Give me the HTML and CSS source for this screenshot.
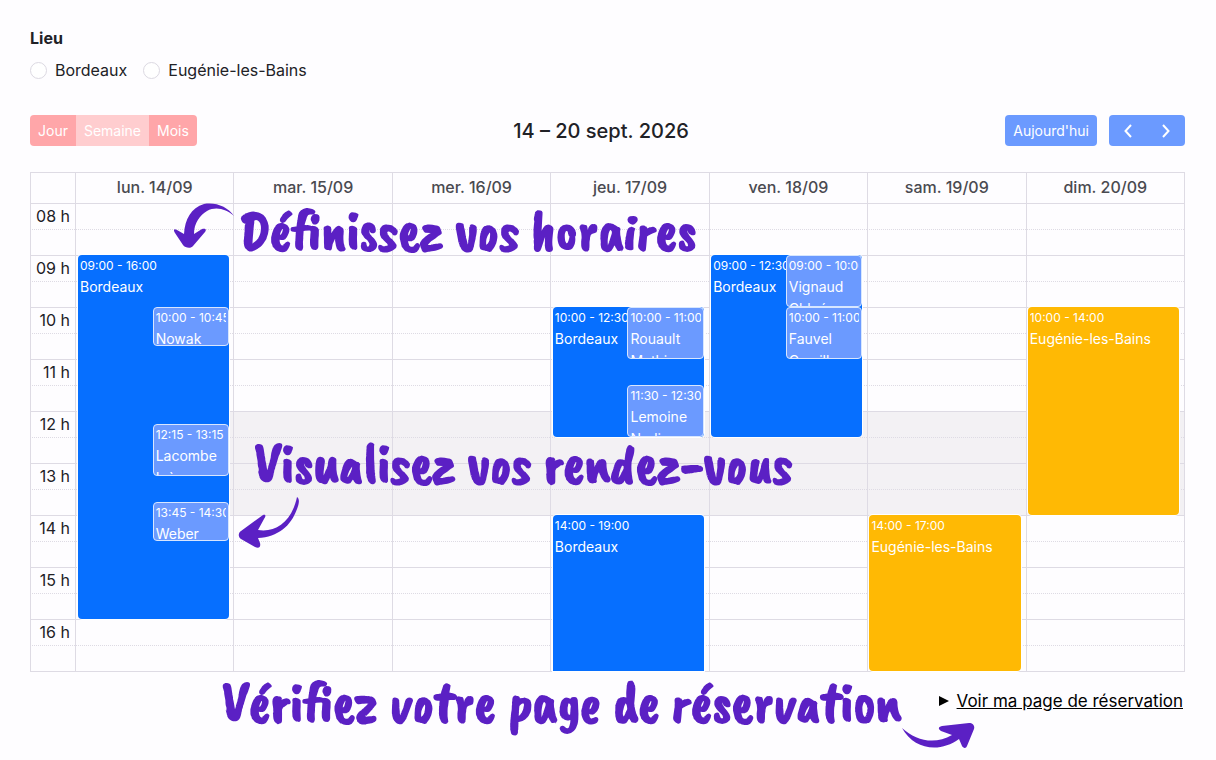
FILE: index.html
```
<!DOCTYPE html>
<html lang="fr">
<head>
    <meta charset="UTF-8">
    <meta name="viewport" content="width=device-width, initial-scale=1.0">
    <title>Agenda</title>
    <link rel="stylesheet" href="styles.css">
</head>
<body>
    <main class="page">
        <fieldset class="places">
            <legend>Lieu</legend>
            <div class="places-list">
                <label><input type="radio" name="place" value="bordeaux">Bordeaux</label>
                <label><input type="radio" name="place" value="eugenie">Eugénie-les-Bains</label>
            </div>
        </fieldset>

        <header class="toolbar">
            <div class="views">
                <button type="button">Jour</button>
                <button type="button" class="active">Semaine</button>
                <button type="button">Mois</button>
            </div>
            <h2>14 – 20 sept. 2026</h2>
            <div class="nav">
                <button type="button" class="today">Aujourd'hui</button>
                <div class="arrows">
                    <button type="button" aria-label="Semaine précédente">
                        <svg width="10" height="14" viewBox="0 0 10 14"><path d="M8 1 2.500 7 8 13"/></svg>
                    </button>
                    <button type="button" aria-label="Semaine suivante">
                        <svg width="10" height="14" viewBox="0 0 10 14"><path d="M2 1 7.500 7 2 13"/></svg>
                    </button>
                </div>
            </div>
        </header>

        <div class="calendar">
            <table>
                <thead>
                    <tr>
                        <th class="axis"></th>
                        <th>lun. 14/09</th>
                        <th>mar. 15/09</th>
                        <th>mer. 16/09</th>
                        <th>jeu. 17/09</th>
                        <th>ven. 18/09</th>
                        <th>sam. 19/09</th>
                        <th>dim. 20/09</th>
                    </tr>
                </thead>
                <tbody>
                    <tr><th>08 h</th><td></td><td></td><td></td><td></td><td></td><td></td><td></td></tr>
                    <tr class="half"><th></th><td></td><td></td><td></td><td></td><td></td><td></td><td></td></tr>
                    <tr><th>09 h</th><td></td><td></td><td></td><td></td><td></td><td></td><td></td></tr>
                    <tr class="half"><th></th><td></td><td></td><td></td><td></td><td></td><td></td><td></td></tr>
                    <tr><th>10 h</th><td></td><td></td><td></td><td></td><td></td><td></td><td></td></tr>
                    <tr class="half"><th></th><td></td><td></td><td></td><td></td><td></td><td></td><td></td></tr>
                    <tr><th>11 h</th><td></td><td></td><td></td><td></td><td></td><td></td><td></td></tr>
                    <tr class="half"><th></th><td></td><td></td><td></td><td></td><td></td><td></td><td></td></tr>
                    <tr class="closed"><th>12 h</th><td></td><td></td><td></td><td></td><td></td><td></td><td></td></tr>
                    <tr class="half closed"><th></th><td></td><td></td><td></td><td></td><td></td><td></td><td></td></tr>
                    <tr class="closed"><th>13 h</th><td></td><td></td><td></td><td></td><td></td><td></td><td></td></tr>
                    <tr class="half closed"><th></th><td></td><td></td><td></td><td></td><td></td><td></td><td></td></tr>
                    <tr><th>14 h</th><td></td><td></td><td></td><td></td><td></td><td></td><td></td></tr>
                    <tr class="half"><th></th><td></td><td></td><td></td><td></td><td></td><td></td><td></td></tr>
                    <tr><th>15 h</th><td></td><td></td><td></td><td></td><td></td><td></td><td></td></tr>
                    <tr class="half"><th></th><td></td><td></td><td></td><td></td><td></td><td></td><td></td></tr>
                    <tr><th>16 h</th><td></td><td></td><td></td><td></td><td></td><td></td><td></td></tr>
                    <tr class="half"><th></th><td></td><td></td><td></td><td></td><td></td><td></td><td></td></tr>
                </tbody>
            </table>

            <!-- one row = 15 minutes, first row = 08:00 -->
            <div class="events">
                <div class="day">
                    <div class="event" style="grid-row: 5 / 33"><time>09:00 - 16:00</time><p>Bordeaux</p></div>
                    <div class="event booking" style="grid-row: 9 / 12"><time>10:00 - 10:45</time><p>Nowak</p></div>
                    <div class="event booking" style="grid-row: 18 / 22"><time>12:15 - 13:15</time><p>Lacombe Inès</p></div>
                    <div class="event booking" style="grid-row: 24 / 27"><time>13:45 - 14:30</time><p>Weber</p></div>
                </div>
                <div class="day"></div>
                <div class="day"></div>
                <div class="day">
                    <div class="event" style="grid-row: 9 / 19"><time>10:00 - 12:30</time><p>Bordeaux</p></div>
                    <div class="event booking" style="grid-row: 9 / 13"><time>10:00 - 11:00</time><p>Rouault Mathieu</p></div>
                    <div class="event booking" style="grid-row: 15 / 19"><time>11:30 - 12:30</time><p>Lemoine Nadia</p></div>
                    <div class="event cut" style="grid-row: 25 / 37"><time>14:00 - 19:00</time><p>Bordeaux</p></div>
                </div>
                <div class="day">
                    <div class="event" style="grid-row: 5 / 19"><time>09:00 - 12:30</time><p>Bordeaux</p></div>
                    <div class="event booking" style="grid-row: 5 / 9"><time>09:00 - 10:00</time><p>Vignaud Chloé</p></div>
                    <div class="event booking" style="grid-row: 9 / 13"><time>10:00 - 11:00</time><p>Fauvel Camille</p></div>
                </div>
                <div class="day">
                    <div class="event yellow" style="grid-row: 25 / 37"><time>14:00 - 17:00</time><p>Eugénie-les-Bains</p></div>
                </div>
                <div class="day">
                    <div class="event yellow" style="grid-row: 9 / 25"><time>10:00 - 14:00</time><p>Eugénie-les-Bains</p></div>
                </div>
            </div>

            <div class="note note-hours">
                <svg width="62" height="46" viewBox="0 0 62 46"><path d="M60 13C54 4 42-1 30 1 17 5 11 16 10 31L3 27c-3-2-4 0-2 3l8 12c2 3 8 4 10 1L31 29c2-3 0-4-3-3l-8 5C20 20 26 12 33 8c9-5 19-2 27 5z"/></svg>
                <span>Définissez vos horaires</span>
            </div>
            <div class="note note-bookings">
                <span>Visualisez vos rendez-vous</span>
                <svg width="64" height="54" viewBox="0 0 64 54"><path d="M59 1c3 2 2 7 0 12C53 30 40 41 20 42l2 5c1 4-1 6-5 4L3 43c-3-2-3-6 0-8L25 19c3-1 3 1 1 4l-6 11C38 37 54 25 59 1z"/></svg>
            </div>
        </div>

        <footer class="bottom">
            <div class="note note-page">
                <span>Vérifiez votre page de réservation</span>
                <svg width="74" height="28" viewBox="0 0 74 28"><path d="M1 6c14 13 33 17 50 7L40 9c-3-2-3-4 1-5l27-3c4 0 6 3 5 6l-7 17c-1 3-4 2-5 0l-3-7C39 31 13 28 1 6z"/></svg>
            </div>
            <svg class="marker" width="10" height="10" viewBox="0 0 10 10"><path d="M0 0 10 5 0 10z"/></svg>
            <a href="#">Voir ma page de réservation</a>
        </footer>
    </main>
</body>
</html>
```
FILE: styles.css
```
* {
    box-sizing: border-box;
}
body {
    margin: 0;
    background-color: #fefdff;
    color: #212126;
    font-family: Inter, "Liberation Sans", sans-serif;
    font-size: 16px;
    line-height: 24px;
}
.page {
    padding: 26px 31px 0 30px;
}
.places {
    border: 0;
    margin: 0;
    padding: 0;
}
.places legend {
    padding: 0;
    font-weight: 700;
}
.places-list {
    display: flex;
    gap: 16px;
    margin-top: 8px;
}
.places label {
    display: flex;
    align-items: center;
    gap: 8px;
}
.places input {
    appearance: none;
    width: 17px;
    height: 17px;
    margin: 0;
    border: 1px solid #dcd9e2;
    border-radius: 50%;
    background-color: #fff;
}
.places input:checked {
    border: 5px solid #066fff;
}

/* toolbar */
.toolbar {
    display: flex;
    justify-content: space-between;
    align-items: center;
    margin: 33px 0 26px;
}
.toolbar h2 {
    margin: 0;
    font-size: 20px;
    font-weight: 500;
}
.toolbar button {
    height: 31px;
    padding: 0 8px;
    border: 0;
    background: none;
    color: #fff;
    font-family: inherit;
    font-size: 14px;
    cursor: pointer;
}
.views {
    display: flex;
    border-radius: 4px;
    overflow: hidden;
    background-color: #ffa6a9;
}
.views .active {
    background-color: #ffcdcf;
}
.nav {
    display: flex;
    align-items: center;
    gap: 12px;
}
.toolbar .today {
    border-radius: 4px;
    background-color: #6b9aff;
}
.arrows {
    display: flex;
    border-radius: 4px;
    background-color: #6b9aff;
}
.toolbar .arrows button {
    display: flex;
    align-items: center;
    justify-content: center;
    width: 38px;
}
.arrows path {
    fill: none;
    stroke: #fff;
    stroke-width: 2;
}

/* calendar */
.calendar {
    position: relative;
}
table {
    width: 100%;
    table-layout: fixed;
    border-spacing: 0;
    border-right: 1px solid #dedbe4;
    border-bottom: 1px solid #dedbe4;
}
th, td {
    height: 26px;
    padding: 0;
    border-top: 1px solid #dedbe4;
    border-left: 1px solid #dedbe4;
    font-weight: 400;
}
thead th {
    height: 31px;
    padding-bottom: 2px;
    color: #4a4a50;
    font-weight: 500;
}
thead .axis {
    width: 45px;
}
tbody th {
    padding-right: 5px;
    line-height: 24px;
    text-align: right;
    vertical-align: top;
}
.half th, .half td {
    border-top: 1px dotted #dedbe4;
}
.closed td {
    background-color: #f3f1f4;
}
.events {
    position: absolute;
    top: 31px;
    left: 46px;
    right: 1px;
    display: grid;
    grid-template-columns: repeat(7, 1fr);
}
.day {
    display: grid;
    grid-template-columns: 1fr 1fr;
    grid-template-rows: repeat(36, 13px);
    margin: 0 5px 0 2px;
}
.event {
    grid-column: 1 / 3;
    min-width: 0;
    padding: 1px 2px;
    overflow: hidden;
    border-radius: 4px;
    background-color: #066fff;
    box-shadow: 0 0 0 1px #fff;
    color: #fff;
    font-size: 14px;
    line-height: 22px;
}
.event time {
    display: block;
    overflow: hidden;
    font-size: 12px;
    line-height: 20px;
    white-space: nowrap;
}
.event p {
    margin: 0;
}
.booking {
    grid-column: 2;
    margin-left: -1px;
    padding: 0 2px;
    border: 1px solid #d7e6ff;
    background-color: #6b9aff;
    box-shadow: none;
}
.yellow {
    background-color: #ffb904;
}
.cut {
    border-radius: 4px 4px 0 0;
}

/* handwritten notes */
.note {
    position: absolute;
    display: flex;
    color: #5b20c4;
    font-family: "Caveat Brush", "Liberation Sans Narrow", sans-serif;
    font-size: 57px;
    font-weight: 700;
    line-height: 60px;
    white-space: nowrap;
}
.note path {
    fill: #5b20c4;
}
.note-hours {
    top: 28px;
    left: 144px;
    gap: 3px;
}
.note-hours svg {
    margin-top: 3px;
}
.note-bookings {
    top: 261px;
    left: 208px;
    flex-direction: column;
    gap: 3px;
}
.note-bookings span {
    padding-left: 16px;
}

.bottom {
    position: relative;
    display: flex;
    justify-content: flex-end;
    align-items: center;
    gap: 8px;
    padding: 17px 2px 44px 0;
}
.note-page {
    top: 0;
    right: 210px;
}
.note-page svg {
    margin-top: 50px;
}
.bottom a {
    color: #000;
    font-size: 17px;
}
```
